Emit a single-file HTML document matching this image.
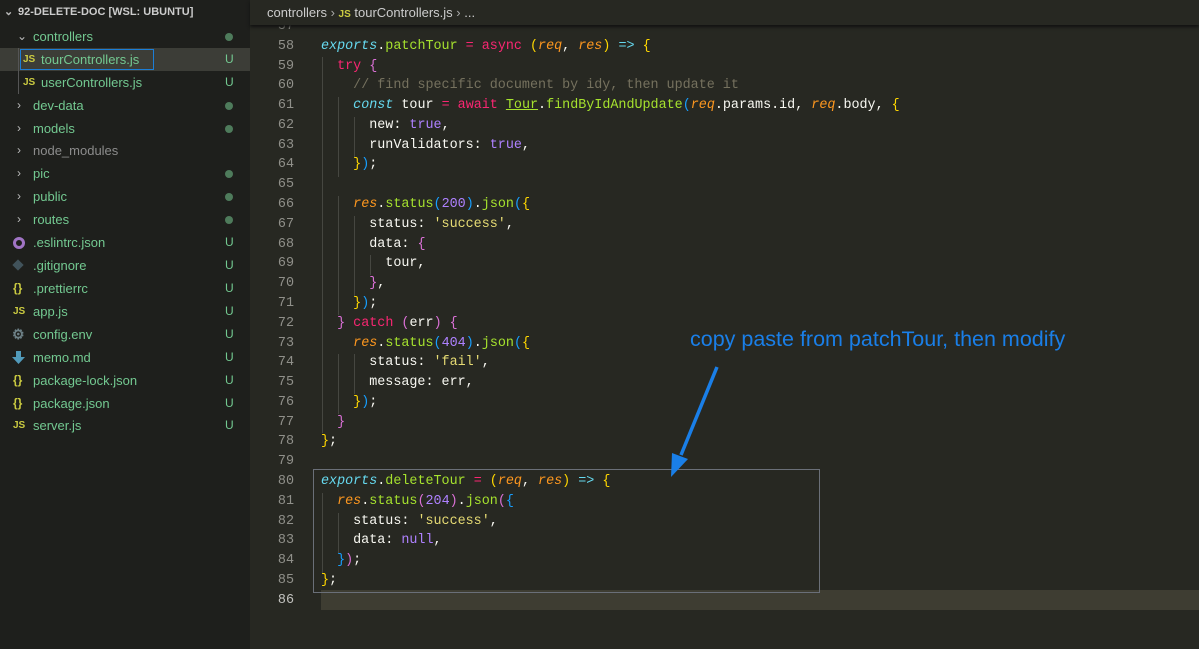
<!DOCTYPE html>
<html><head><meta charset="utf-8"><style>
*{margin:0;padding:0;box-sizing:border-box}
html,body{width:1199px;height:649px;overflow:hidden}
body{background:#272822;position:relative;font-family:"Liberation Sans",sans-serif}
#side{position:absolute;left:0;top:0;width:250px;height:649px;background:#1e1f1c}
.hdr{position:absolute;left:0;top:0;width:250px;height:24px;color:#ccc;font-weight:bold;font-size:11px;line-height:24px;padding-left:18px}
.row{position:absolute;left:0;width:250px;height:23px;line-height:23px;font-size:13px;color:#73c991}
.row .n{position:absolute}
.row .u{position:absolute;left:225px;font-size:12px}
.row .d{position:absolute;left:225px;top:8px;width:8px;height:8px;border-radius:4px;background:#4e7b5b}
.chev{position:absolute;top:0;color:#bbb;font-size:12px}
.ic{position:absolute;font-size:10px;font-weight:bold}
#bc{position:absolute;left:250px;top:0;width:949px;height:25px;background:#272822;color:#ccc;font-size:13px;line-height:26px;padding-left:17px;z-index:3;box-shadow:0 2px 3px #111}
#code{position:absolute;left:250px;top:17px;width:949px;font-family:"Liberation Mono",monospace;font-size:13.4px;line-height:19.79px;color:#f8f8f2}
.l{position:relative;height:19.79px}
.ln{position:absolute;left:0;width:44px;text-align:right;color:#90908a}
.c{position:absolute;left:71px;white-space:pre}
.k{color:#f92672}.f{color:#a6e22e}.i{color:#66d9ef;font-style:italic}.p{color:#fd971f;font-style:italic}.n2{color:#ae81ff}.s{color:#e6db74}.cm{color:#75715e}
.b1{color:#ffd700}.b2{color:#da70d6}.b3{color:#179fff}
.g{position:absolute;width:1px;background:#464741}
</style></head><body>
<div id="side">
<div class="hdr"><span style="position:absolute;left:4px;color:#bbb">&#8964;</span>92-DELETE-DOC [WSL: UBUNTU]</div>
<div class="row" style="top:25px"><span class="chev" style="left:17px">&#8964;</span><span class="n" style="left:33px">controllers</span><span class="d"></span></div>
<div class="row" style="top:48px;background:#3c3d37"><div style="position:absolute;left:20px;top:1px;width:134px;height:21px;border:1px solid #1c7ed6"></div><span class="ic" style="left:23px;color:#cbcb41">JS</span><span class="n" style="left:41px">tourControllers.js</span><span class="u">U</span></div>
<div class="row" style="top:71px"><span class="ic" style="left:23px;color:#cbcb41">JS</span><span class="n" style="left:41px">userControllers.js</span><span class="u">U</span></div>
<div style="position:absolute;left:18px;top:48px;width:1px;height:46px;background:#555"></div>
<div class="row" style="top:94px"><span class="chev" style="left:17px">&#8250;</span><span class="n" style="left:33px">dev-data</span><span class="d"></span></div>
<div class="row" style="top:117px"><span class="chev" style="left:17px">&#8250;</span><span class="n" style="left:33px">models</span><span class="d"></span></div>
<div class="row" style="top:139px;color:#8c8c8c"><span class="chev" style="left:17px">&#8250;</span><span class="n" style="left:33px">node_modules</span></div>
<div class="row" style="top:162px"><span class="chev" style="left:17px">&#8250;</span><span class="n" style="left:33px">pic</span><span class="d"></span></div>
<div class="row" style="top:185px"><span class="chev" style="left:17px">&#8250;</span><span class="n" style="left:33px">public</span><span class="d"></span></div>
<div class="row" style="top:208px"><span class="chev" style="left:17px">&#8250;</span><span class="n" style="left:33px">routes</span><span class="d"></span></div>
<div class="row" style="top:231px"><span class="ic" style="left:13px;top:6px;width:12px;height:12px;border:3px solid #a074c4;border-radius:50%"></span><span class="n" style="left:33px">.eslintrc.json</span><span class="u">U</span></div>
<div class="row" style="top:254px"><span class="ic" style="left:14px;top:7px;width:8px;height:8px;background:#41535b;transform:rotate(45deg)"></span><span class="n" style="left:33px">.gitignore</span><span class="u">U</span></div>
<div class="row" style="top:277px"><span class="ic" style="left:13px;color:#cbcb41;font-size:12px">{}</span><span class="n" style="left:33px">.prettierrc</span><span class="u">U</span></div>
<div class="row" style="top:300px"><span class="ic" style="left:13px;color:#cbcb41">JS</span><span class="n" style="left:33px">app.js</span><span class="u">U</span></div>
<div class="row" style="top:323px"><span class="ic" style="left:12px;color:#6d8086;font-size:14px">&#9881;</span><span class="n" style="left:33px">config.env</span><span class="u">U</span></div>
<div class="row" style="top:346px"><svg class="ic" style="left:12px;top:5px" width="13" height="13"><path d="M4 0h5v6h4l-6.5 7L0 6h4z" fill="#519aba"/></svg><span class="n" style="left:33px">memo.md</span><span class="u">U</span></div>
<div class="row" style="top:369px"><span class="ic" style="left:13px;color:#cbcb41;font-size:12px">{}</span><span class="n" style="left:33px">package-lock.json</span><span class="u">U</span></div>
<div class="row" style="top:392px"><span class="ic" style="left:13px;color:#cbcb41;font-size:12px">{}</span><span class="n" style="left:33px">package.json</span><span class="u">U</span></div>
<div class="row" style="top:414px"><span class="ic" style="left:13px;color:#cbcb41">JS</span><span class="n" style="left:33px">server.js</span><span class="u">U</span></div>
</div>
<div id="bc">controllers <span style="color:#aaa">&#8250;</span> <span style="color:#cbcb41;font-size:10px;font-weight:bold">JS</span> tourControllers.js <span style="color:#aaa">&#8250;</span> ...</div>
<div style="position:absolute;left:321px;top:590px;width:878px;height:20px;background:#3e3d32"></div>
<div id="code"><div class="l"><span class="ln">57</span></div><div class="l"><span class="ln">58</span><span class="c"><span class="i">exports</span>.<span class="f">patchTour</span> <span class="k">=</span> <span class="k">async</span> <span class="b1">(</span><span class="p">req</span>, <span class="p">res</span><span class="b1">)</span> <span class="i">=&gt;</span> <span class="b1">{</span></span></div><div class="l"><span class="ln">59</span><span class="c">  <span class="k">try</span> <span class="b2">{</span></span></div><div class="l"><span class="ln">60</span><span class="c">    <span class="cm">// find specific document by idy, then update it</span></span></div><div class="l"><span class="ln">61</span><span class="c">    <span class="i">const</span> tour <span class="k">=</span> <span class="k">await</span> <span style="text-decoration:underline;text-decoration-color:#a6e22e" class="f">Tour</span>.<span class="f">findByIdAndUpdate</span><span class="b3">(</span><span class="p">req</span>.params.id, <span class="p">req</span>.body, <span class="b1">{</span></span></div><div class="l"><span class="ln">62</span><span class="c">      new: <span class="n2">true</span>,</span></div><div class="l"><span class="ln">63</span><span class="c">      runValidators: <span class="n2">true</span>,</span></div><div class="l"><span class="ln">64</span><span class="c">    <span class="b1">}</span><span class="b3">)</span>;</span></div><div class="l"><span class="ln">65</span></div><div class="l"><span class="ln">66</span><span class="c">    <span class="p">res</span>.<span class="f">status</span><span class="b3">(</span><span class="n2">200</span><span class="b3">)</span>.<span class="f">json</span><span class="b3">(</span><span class="b1">{</span></span></div><div class="l"><span class="ln">67</span><span class="c">      status: <span class="s">'success'</span>,</span></div><div class="l"><span class="ln">68</span><span class="c">      data: <span class="b2">{</span></span></div><div class="l"><span class="ln">69</span><span class="c">        tour,</span></div><div class="l"><span class="ln">70</span><span class="c">      <span class="b2">}</span>,</span></div><div class="l"><span class="ln">71</span><span class="c">    <span class="b1">}</span><span class="b3">)</span>;</span></div><div class="l"><span class="ln">72</span><span class="c">  <span class="b2">}</span> <span class="k">catch</span> <span class="b2">(</span>err<span class="b2">)</span> <span class="b2">{</span></span></div><div class="l"><span class="ln">73</span><span class="c">    <span class="p">res</span>.<span class="f">status</span><span class="b3">(</span><span class="n2">404</span><span class="b3">)</span>.<span class="f">json</span><span class="b3">(</span><span class="b1">{</span></span></div><div class="l"><span class="ln">74</span><span class="c">      status: <span class="s">'fail'</span>,</span></div><div class="l"><span class="ln">75</span><span class="c">      message: err,</span></div><div class="l"><span class="ln">76</span><span class="c">    <span class="b1">}</span><span class="b3">)</span>;</span></div><div class="l"><span class="ln">77</span><span class="c">  <span class="b2">}</span></span></div><div class="l"><span class="ln">78</span><span class="c"><span class="b1">}</span>;</span></div><div class="l"><span class="ln">79</span></div><div class="l"><span class="ln">80</span><span class="c"><span class="i">exports</span>.<span class="f">deleteTour</span> <span class="k">=</span> <span class="b1">(</span><span class="p">req</span>, <span class="p">res</span><span class="b1">)</span> <span class="i">=&gt;</span> <span class="b1">{</span></span></div><div class="l"><span class="ln">81</span><span class="c">  <span class="p">res</span>.<span class="f">status</span><span class="b2">(</span><span class="n2">204</span><span class="b2">)</span>.<span class="f">json</span><span class="b2">(</span><span class="b3">{</span></span></div><div class="l"><span class="ln">82</span><span class="c">    status: <span class="s">'success'</span>,</span></div><div class="l"><span class="ln">83</span><span class="c">    data: <span class="n2">null</span>,</span></div><div class="l"><span class="ln">84</span><span class="c">  <span class="b3">}</span><span class="b2">)</span>;</span></div><div class="l"><span class="ln">85</span><span class="c"><span class="b1">}</span>;</span></div><div class="l"><span class="ln" style="color:#c2c2bf">86</span></div></div>
<div class="g" style="left:322px;top:57px;height:376px"></div>
<div class="g" style="left:338px;top:97px;height:80px"></div>
<div class="g" style="left:338px;top:196px;height:119px"></div>
<div class="g" style="left:338px;top:354px;height:60px"></div>
<div class="g" style="left:354px;top:117px;height:40px"></div>
<div class="g" style="left:354px;top:216px;height:80px"></div>
<div class="g" style="left:354px;top:354px;height:40px"></div>
<div class="g" style="left:370px;top:255px;height:20px"></div>
<div class="g" style="left:322px;top:493px;height:80px"></div>
<div class="g" style="left:338px;top:513px;height:40px"></div>
<div style="position:absolute;left:313px;top:469px;width:507px;height:124px;border:1px solid #6a6f78"></div>
<div style="position:absolute;left:690px;top:327px;color:#1a7fe8;font-size:21.5px;white-space:nowrap">copy paste from patchTour, then modify</div>
<svg style="position:absolute;left:0;top:0" width="1199" height="649"><line x1="717" y1="367" x2="681" y2="455" stroke="#1a7fe8" stroke-width="3.5"/><polygon points="671,477 672,453 688,459" fill="#1a7fe8"/></svg>
</body></html>
